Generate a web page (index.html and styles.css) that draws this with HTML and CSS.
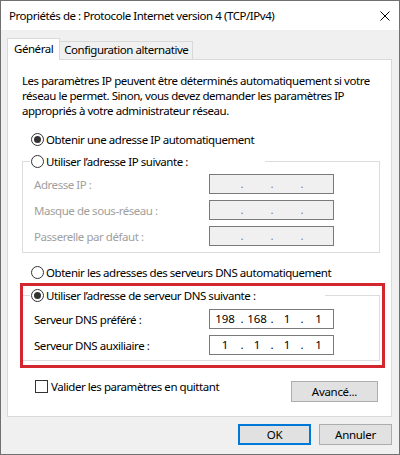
FILE: index.html
```html
<!DOCTYPE html>
<html lang="fr">
<head>
  <meta charset="utf-8">
  <title>Propriétés de : Protocole Internet version 4 (TCP/IPv4)</title>
  <link rel="stylesheet" href="styles.css">
</head>
<body>

  <div class="window">
    <div class="titlebar">
      <span class="title">Propriétés de : Protocole Internet version 4 (TCP/IPv4)</span>
      <svg class="close" width="10" height="10" viewBox="0 0 10 10">
        <path d="M0.5 0.5 L9.5 9.5 M9.5 0.5 L0.5 9.5" stroke="#000" stroke-width="1" fill="none"/>
      </svg>
    </div>

    <div class="client">
      <!-- Tabs -->
      <div class="tabs">
        <div class="tab active">Général</div>
        <div class="tab">Configuration alternative</div>
      </div>

      <div class="panel">
        <p class="intro">Les paramètres IP peuvent être déterminés automatiquement si votre réseau le permet. Sinon, vous devez demander les paramètres IP appropriés à votre administrateur réseau.</p>

        <!-- IP address -->
        <div class="option"><span class="radio checked"></span>Obtenir une adresse IP automatiquement</div>

        <fieldset class="group">
          <legend class="legend-ip"><span class="radio"></span>Utiliser l’adresse IP suivante :</legend>
          <div class="rows">
            <div class="row disabled">
              <span class="label">Adresse IP :</span>
              <div class="ip"><span></span><i>.</i><span></span><i>.</i><span></span><i>.</i><span></span></div>
            </div>
            <div class="row disabled">
              <span class="label">Masque de sous-réseau :</span>
              <div class="ip"><span></span><i>.</i><span></span><i>.</i><span></span><i>.</i><span></span></div>
            </div>
            <div class="row disabled">
              <span class="label">Passerelle par défaut :</span>
              <div class="ip"><span></span><i>.</i><span></span><i>.</i><span></span><i>.</i><span></span></div>
            </div>
          </div>
        </fieldset>

        <!-- DNS -->
        <div class="option dns-auto"><span class="radio"></span>Obtenir les adresses des serveurs DNS automatiquement</div>

        <div class="dns-wrap">
          <fieldset class="group">
            <legend class="legend-dns"><span class="radio checked"></span>Utiliser l’adresse de serveur DNS suivante :</legend>
            <div class="rows">
              <div class="row">
                <span class="label">Serveur DNS préféré :</span>
                <div class="ip"><span>198</span><i>.</i><span>168</span><i>.</i><span>1</span><i>.</i><span>1</span></div>
              </div>
              <div class="row">
                <span class="label">Serveur DNS auxiliaire :</span>
                <div class="ip"><span>1</span><i>.</i><span>1</span><i>.</i><span>1</span><i>.</i><span>1</span></div>
              </div>
            </div>
          </fieldset>
          <div class="highlight"></div>
        </div>

        <div class="panel-footer">
          <div class="check"><span class="box"></span>Valider les paramètres en quittant</div>
          <button class="btn advanced">Avancé...</button>
        </div>
      </div>

      <div class="actions">
        <button class="btn default">OK</button>
        <button class="btn">Annuler</button>
      </div>
    </div>
  </div>

</body>
</html>
```

FILE: styles.css
```css
/* Windows dialog look */
body {
  margin: 0;
  font-family: "Segoe UI", "Noto Sans", sans-serif;
  font-size: 11.5px;
  letter-spacing: -0.45px;
  color: #000;
}

.window {
  box-sizing: border-box;
  width: 400px;
  height: 455px;
  border: 1px solid #707070;
  background-color: #f0f0f0;
  display: flex;
  flex-direction: column;
}

.titlebar {
  height: 29px;
  background-color: #fff;
  display: flex;
  align-items: center;
  justify-content: space-between;
  padding: 0 9px 0 8px;
}

.close {
  display: block;
}

.client {
  padding: 8px 7px 0 6px;
}

/* Tabs */
.tabs {
  display: flex;
  align-items: flex-end;
}

.tab {
  box-sizing: border-box;
  height: 18px;
  line-height: 16px;
  padding: 0 4px;
  border: 1px solid #d9d9d9;
  border-bottom: none;
  border-left: none;
  background-color: #f0f0f0;
}

.tab.active {
  position: relative;
  height: 22px;
  line-height: 20px;
  margin-bottom: -1px;
  padding: 0 6px;
  border-left: 1px solid #d9d9d9;
  background-color: #fff;
}

.panel {
  background-color: #fff;
  border: 1px solid #d9d9d9;
  padding: 0 11px 14px 14px;
}

.intro {
  margin: 13px 0 0;
  line-height: 15px;
}

/* Radios and checkbox */
.option {
  display: flex;
  align-items: center;
  height: 16px;
  margin-top: 13px;
  padding-left: 9px;
}

.option.dns-auto {
  margin-top: 11px;
}

.radio {
  box-sizing: border-box;
  width: 13px;
  height: 13px;
  border: 1px solid #333;
  border-radius: 50%;
  background-color: #fff;
  margin-right: 2px;
  display: flex;
  align-items: center;
  justify-content: center;
  flex-shrink: 0;
}

.radio.checked::after {
  content: "";
  width: 7px;
  height: 7px;
  border-radius: 50%;
  background-color: #333;
}

/* Group boxes */
.group {
  margin: 6px 0 0;
  padding: 5px 0 6px;
  border: 1px solid #dcdcdc;
  min-width: 0;
}

legend {
  display: flex;
  align-items: center;
  height: 16px;
  padding: 0;
  margin-left: 7px;
  box-sizing: border-box;
  padding-left: 1px;
}

.legend-ip {
  width: 235px;
}

.legend-dns {
  width: 295px;
}

.rows {
  display: flex;
  flex-direction: column;
  gap: 6px;
  padding-left: 11px;
}

.row {
  display: grid;
  grid-template-columns: 175px 125px;
  align-items: center;
}

.row.disabled .label {
  color: #a0a0a0;
}

.ip {
  box-sizing: border-box;
  height: 20px;
  border: 1px solid #7a7a7a;
  background-color: #fff;
  display: grid;
  grid-template-columns: 30px 4px 26px 4px 26px 4px 1fr;
  align-items: center;
  line-height: 16px;
  letter-spacing: 0;
}

.ip span {
  text-align: center;
}

.ip i {
  font-style: normal;
  text-align: center;
}

.row.disabled .ip {
  background-color: #f0f0f0;
  color: #808080;
}

/* Red highlight round the DNS group */
.dns-wrap {
  position: relative;
  margin-top: 7px;
}

.dns-wrap .group {
  margin-top: 0;
  padding-top: 6px;
  padding-bottom: 5px;
}

.highlight {
  position: absolute;
  top: -4px;
  left: -2px;
  right: -5px;
  bottom: -7px;
  border: 3px solid #d3262e;
}

/* Footer of the panel */
.panel-footer {
  display: flex;
  justify-content: space-between;
  align-items: flex-start;
  margin-top: 17px;
}

.check {
  display: flex;
  align-items: center;
  height: 16px;
  padding-left: 13px;
}

.box {
  box-sizing: border-box;
  width: 13px;
  height: 13px;
  border: 1px solid #333;
  background-color: #fff;
  margin-right: 3px;
}

.btn {
  box-sizing: border-box;
  height: 21px;
  padding: 0;
  font-family: inherit;
  font-size: 11.5px;
  letter-spacing: -0.3px;
  color: #000;
  background-color: #e1e1e1;
  border: 1px solid #adadad;
}

.advanced {
  width: 87px;
  margin: 3px 2px 0 0;
}

.actions {
  display: flex;
  justify-content: flex-end;
  gap: 8px;
  margin-top: 7px;
}

.actions .btn {
  width: 73px;
}

.btn.default {
  border: 2px solid #0078d7;
}
```
